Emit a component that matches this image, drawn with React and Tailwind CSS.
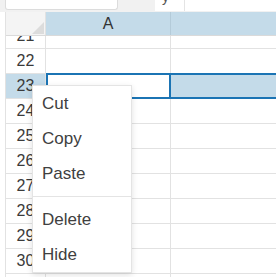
import React from 'react';

const rows = [22, 23, 24, 25, 26, 27, 28, 29, 30, 31];

function RowNum({ n, active }) {
    return (
        <div className={`w-[40px] shrink-0 flex items-center justify-center border-r border-[#e2e2e2] ${active ? 'bg-[#c4dbe9]' : 'bg-white'}`}>
            {n}
        </div>
    );
}

function Row({ n }) {
    if (n === 23) {
        return (
            <div className="flex h-[25px] border-b border-[#e2e2e2]">
                <RowNum n={n} active />
                <div className="w-[125px] shrink-0 -mt-[1px] h-[26px] border-2 border-[#1b74b4] bg-white"></div>
                <div className="flex-1 -mt-[1px] h-[26px] border-y-2 border-[#1b74b4] bg-[#c4dbe9]"></div>
            </div>
        );
    }
    return (
        <div className="flex h-[25px] border-b border-[#e2e2e2]">
            <RowNum n={n} />
            <div className="w-[125px] shrink-0 border-r border-[#e2e2e2]"></div>
            <div className="flex-1"></div>
        </div>
    );
}

const menu = ['Cut', 'Copy', 'Paste'];
const menu2 = ['Delete', 'Hide'];

export default function App() {
    return (
        <div className="relative w-[276px] h-[277px] overflow-hidden bg-white text-[16px] text-[#3a3a3a]" style={{ fontFamily: '"Liberation Sans", Arial, sans-serif' }}>
            {/* top bar */}
            <div className="flex h-[12px] bg-[#f1f1f1]">
                <div className="ml-[5px] w-[113px] h-[10px] bg-white border border-t-0 border-[#dcdcdc] rounded-b-[3px]"></div>
                <div className="ml-[37px] w-[30px] h-[11px] bg-white border-r border-[#e4e4e4] relative overflow-hidden">
                    <span className="absolute left-[7px] top-[-13px] text-[14px] text-[#555]">y</span>
                </div>
                <div className="flex-1 h-[11px] bg-white"></div>
            </div>

            <div className="ml-[5px] border-l border-[#e2e2e2]">
                {/* header */}
                <div className="flex h-[24px] border-b border-[#dadada]">
                    <div className="relative w-[40px] shrink-0 bg-[#f4f4f4] border-r border-[#e2e2e2]">
                        <svg className="absolute right-[1px] bottom-[1px]" width="12" height="12" viewBox="0 0 12 12">
                            <polygon points="12,0 12,12 0,12" fill="#dcdcdc" />
                        </svg>
                    </div>
                    <div className="w-[125px] shrink-0 flex items-center justify-center bg-[#c4dbe9] border-r border-[#b4cbd9] text-[#333]">A</div>
                    <div className="flex-1 bg-[#c4dbe9]"></div>
                </div>

                {/* partially scrolled row 21 */}
                <div className="h-[13px] overflow-hidden border-b border-[#e2e2e2]">
                    <div className="flex h-[25px] -mt-[13px]">
                        <RowNum n={21} />
                        <div className="w-[125px] shrink-0 border-r border-[#e2e2e2]"></div>
                        <div className="flex-1"></div>
                    </div>
                </div>

                {rows.map(n => <Row key={n} n={n} />)}
            </div>

            {/* context menu */}
            <div className="absolute left-[32px] top-[85px] w-[100px] bg-white border border-[#e4e4e4] text-[17px] text-[#404040] shadow-[0_2px_6px_rgba(0,0,0,0.12)]">
                {menu.map(m => (
                    <div key={m} className="h-[35px] flex items-center pl-[9px]">{m}</div>
                ))}
                <div className="my-[5px] h-px bg-[#e4e4e4]"></div>
                {menu2.map(m => (
                    <div key={m} className="h-[35px] flex items-center pl-[9px]">{m}</div>
                ))}
            </div>
        </div>
    );
}
